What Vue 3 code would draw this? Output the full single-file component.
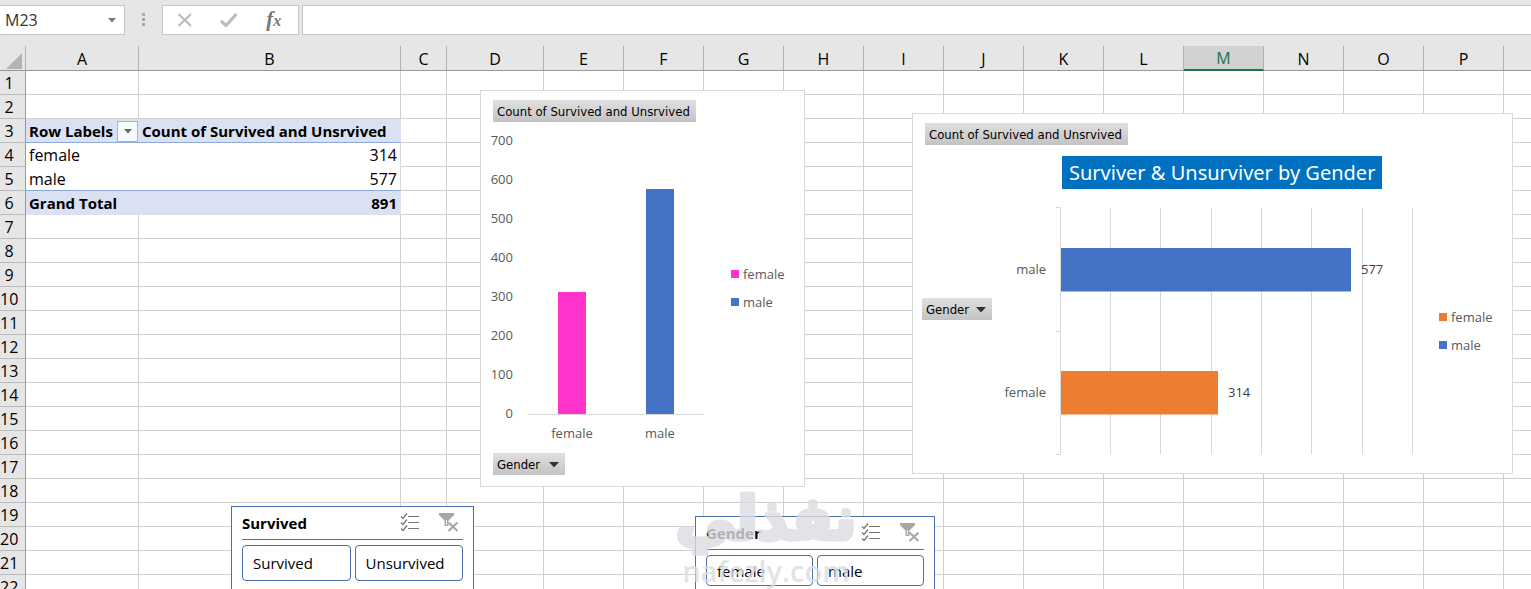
<script setup>
import { ref } from 'vue'

const cellName = ref('M23')
const formula = ref('')

const columns = 'ABCDEFGHIJKLMNOP'.split('')
const activeColumn = 'M'
const rowCount = 22

const pivot = {
  3: { a: 'Row Labels', b: 'Count of Survived and Unsrvived', kind: 'head' },
  4: { a: 'female', b: '314', kind: 'item' },
  5: { a: 'male', b: '577', kind: 'last' },
  6: { a: 'Grand Total', b: '891', kind: 'total' },
}

// Column chart geometry
const base = 292
const perHundred = 39
const ticks = [700, 600, 500, 400, 300, 200, 100, 0]
const bars = [
  { name: 'female', value: 314, x: 77, color: '#ff33cc' },
  { name: 'male', value: 577, x: 165, color: '#4472c4' },
]
const barHeight = (v) => Math.round((v / 100) * perHundred)

// Bar chart geometry
const axisX = 68
const gridX = [118, 168, 219, 269, 319, 370, 420]
const hbars = [
  { name: 'male', value: 577, y: 59, color: '#4472c4' },
  { name: 'female', value: 314, y: 182, color: '#ed7d31' },
]
const barWidth = (v) => Math.floor(v * 0.503)

const legends = {
  first: [{ name: 'female', cls: 'pink' }, { name: 'male', cls: 'blue' }],
  second: [{ name: 'female', cls: 'orange' }, { name: 'male', cls: 'blue' }],
}

const slicers = [
  { title: 'Survived', cls: 'slicer-survived', items: ['Survived', 'Unsurvived'] },
  { title: 'Gender', cls: 'slicer-gender', items: ['female', 'male'] },
]
</script>

<template>
  <div class="app">
    <header class="formula-bar">
      <div class="name-box">
        <input v-model="cellName" aria-label="Name box" />
        <button type="button" aria-label="Open name list">
          <svg width="8" height="5" viewBox="0 0 8 5"><path d="M0 0h8L4 4.500z" fill="#777" /></svg>
        </button>
      </div>
      <svg class="grip" width="3" height="14" viewBox="0 0 3 14" fill="#a9a9a9">
        <path d="M0 0h3v3H0zM0 5h3v3H0zM0 10h3v3H0z" />
      </svg>
      <div class="tools">
        <button type="button" aria-label="Cancel">
          <svg width="16" height="14" viewBox="0 0 16 14"><path d="M1.500 1 14 13M14 1 1.500 13" stroke="#bdbdbd" stroke-width="2.200" fill="none" /></svg>
        </button>
        <button type="button" aria-label="Enter">
          <svg width="18" height="14" viewBox="0 0 18 14"><path d="M1 8l5 4.500L16.500 1" stroke="#bdbdbd" stroke-width="3.200" fill="none" /></svg>
        </button>
        <button type="button" class="fx" aria-label="Insert function"><span>f</span><small>x</small></button>
      </div>
      <input v-model="formula" class="formula" aria-label="Formula" />
    </header>

    <main class="sheet">
      <table class="grid">
        <colgroup>
          <col class="c-head" />
          <col v-for="c in columns" :key="c" :class="'c-' + c" />
          <col class="c-rest" />
        </colgroup>
        <thead>
          <tr>
            <th class="corner">
              <svg width="16" height="16" viewBox="0 0 16 16"><path d="M16 0v16H0z" fill="#b4b4b4" /></svg>
            </th>
            <th v-for="c in columns" :key="c" scope="col" :class="{ active: c === activeColumn }">{{ c }}</th>
            <th></th>
          </tr>
        </thead>
        <tbody>
          <tr v-for="r in rowCount" :key="r">
            <th scope="row">{{ r }}</th>
            <template v-for="c in columns" :key="c">
              <td v-if="pivot[r] && c === 'A'" :class="['pivot', pivot[r].kind]">
                <div v-if="pivot[r].kind === 'head'" class="label">
                  <span>{{ pivot[r].a }}</span>
                  <button type="button" class="filter" aria-label="Filter row labels">
                    <svg width="8" height="5" viewBox="0 0 8 5"><path d="M0 0h8L4 4.500z" fill="#666" /></svg>
                  </button>
                </div>
                <template v-else>{{ pivot[r].a }}</template>
              </td>
              <td v-else-if="pivot[r] && c === 'B'" :class="['pivot', 'value', pivot[r].kind]">{{ pivot[r].b }}</td>
              <td v-else></td>
            </template>
            <td></td>
          </tr>
        </tbody>
      </table>

      <section class="chart chart-columns" aria-label="Column chart">
        <button type="button" class="field">Count of Survived and Unsrvived</button>
        <div class="body">
          <svg width="234" height="331" viewBox="0 0 234 331">
            <text v-for="(t, i) in ticks" :key="t" x="32" :y="23 + i * perHundred" text-anchor="end">{{ t }}</text>
            <path d="M47 292.500H223" stroke="#d9d9d9" />
            <g v-for="b in bars" :key="b.name">
              <rect :x="b.x" :y="base - barHeight(b.value)" width="28" :height="barHeight(b.value)" :fill="b.color" />
              <text :x="b.x + 14" y="316" text-anchor="middle">{{ b.name }}</text>
            </g>
          </svg>
          <ul class="legend">
            <li v-for="l in legends.first" :key="l.name"><i :class="l.cls"></i>{{ l.name }}</li>
          </ul>
        </div>
        <button type="button" class="field drop">Gender
          <svg width="10" height="6" viewBox="0 0 10 6"><path d="M0 0h10L5 5.500z" fill="#333" /></svg>
        </button>
      </section>

      <section class="chart chart-bars" aria-label="Bar chart">
        <button type="button" class="field">Count of Survived and Unsrvived</button>
        <h2>Surviver &amp; Unsurviver by Gender</h2>
        <div class="body">
          <button type="button" class="field drop">Gender
            <svg width="10" height="6" viewBox="0 0 10 6"><path d="M0 0h10L5 5.500z" fill="#333" /></svg>
          </button>
          <svg width="433" height="284" viewBox="0 0 433 284">
            <path v-for="x in gridX" :key="x" :d="`M${x + 0.5} 19V265`" stroke="#d9d9d9" />
            <path d="M64 18.500h4.500V265.500H64M64 142.500h4" stroke="#d9d9d9" fill="none" />
            <g v-for="b in hbars" :key="b.name">
              <rect :x="axisX + 1" :y="b.y" :width="barWidth(b.value)" height="43.500" :fill="b.color" />
              <text x="54" :y="b.y + 26" text-anchor="end">{{ b.name }}</text>
              <text class="value-label" :x="axisX + barWidth(b.value) + 11" :y="b.y + 26">{{ b.value }}</text>
            </g>
          </svg>
          <ul class="legend">
            <li v-for="l in legends.second" :key="l.name"><i :class="l.cls"></i>{{ l.name }}</li>
          </ul>
        </div>
      </section>

      <section v-for="s in slicers" :key="s.title" :class="['slicer', s.cls]" :aria-label="s.title">
        <div class="slicer-head">
          <h3>{{ s.title }}</h3>
          <button type="button" aria-label="Multi-select">
            <svg width="19" height="19" viewBox="0 0 19 19" fill="none" stroke="#777">
              <path d="M8 3.500h11M8 9.500h11M8 15.500h11" />
              <path d="M1 3.500l2 2 4-5M1 9.500l2 2 4-5M1 15.500l2 2 4-5" stroke-width="1.300" />
            </svg>
          </button>
          <button type="button" aria-label="Clear filter">
            <svg width="20" height="19" viewBox="0 0 20 19">
              <path d="M0 0h15v2L9.500 7.500V13H5.500V7.500L0 2z" fill="#a6a6a6" />
              <path d="M7.500 7v5" stroke="#eee" />
              <path d="M9.500 9.500l9 8.500M18.500 9.500l-9 8.500" stroke="#a6a6a6" stroke-width="2" />
            </svg>
          </button>
        </div>
        <div class="slicer-items">
          <button v-for="i in s.items" :key="i" type="button">{{ i }}</button>
        </div>
      </section>

      <div class="watermark">
        <svg width="200" height="104" viewBox="0 0 200 104">
          <text class="arabic" x="102" y="54" text-anchor="middle">نفذلي</text>
          <text class="latin" x="102" y="97" text-anchor="middle">nafezly.com</text>
        </svg>
      </div>
    </main>
  </div>
</template>

<style>
body {
  margin: 0;
}
</style>

<style scoped>
.app {
  display: flex;
  flex-direction: column;
  height: 100vh;
  overflow: hidden;
  background: #e6e6e6;
  font-family: "Open Sans", "Noto Sans", sans-serif;
  font-size: 16px;
  color: #000;
}
.app *,
.app *::before {
  box-sizing: border-box;
}
button {
  margin: 0;
  padding: 0;
  border: 0;
  background: none;
  font: inherit;
  color: inherit;
}
.formula-bar {
  display: flex;
  align-items: stretch;
  height: 46px;
  padding: 5px 0 11px;
  flex: none;
}
.name-box {
  display: flex;
  width: 125px;
  background: #fff;
  border: 1px solid #c6c6c6;
  border-left: 0;
}
.name-box input {
  width: 104px;
  padding: 0 0 0 5px;
  border: 0;
  outline: 0;
  background: none;
  font: inherit;
  font-size: 16px;
  color: #333;
}
.name-box button {
  display: flex;
  align-items: center;
  padding-left: 4px;
}
.grip {
  margin: 8px 17px 0;
}
.tools {
  display: flex;
  width: 137px;
  padding-right: 2px;
  background: #fff;
  border: 1px solid #c6c6c6;
}
.tools button {
  display: flex;
  flex: 1;
  align-items: center;
  justify-content: center;
}
.tools .fx {
  align-items: baseline;
  font-family: "Liberation Serif", serif;
  font-style: italic;
  font-weight: bold;
  font-size: 21px;
  line-height: 26px;
  color: #777;
}
.fx small {
  font-size: 16px;
}
.formula {
  flex: 1;
  min-width: 0;
  margin-left: 3px;
  padding: 0 6px;
  border: 1px solid #c6c6c6;
  border-right: 0;
  outline: 0;
  background: #fff;
  font: inherit;
}

.sheet {
  position: relative;
  flex: 1;
  min-height: 0;
  overflow: hidden;
}
.grid {
  width: 100%;
  table-layout: fixed;
  border-collapse: separate;
  border-spacing: 0;
  background: #fff;
}
.grid col {
  width: 80px;
}
.grid .c-head {
  width: 26px;
}
.grid .c-A {
  width: 113px;
}
.grid .c-B {
  width: 262px;
}
.grid .c-C {
  width: 46px;
}
.grid .c-D {
  width: 97px;
}
.grid .c-rest {
  width: auto;
}
.grid th,
.grid td {
  height: 24px;
  padding: 2px 0 0;
  border-right: 1px solid #d0d0d0;
  border-bottom: 1px solid #d0d0d0;
  line-height: 21px;
  white-space: nowrap;
}
.grid th:last-child,
.grid td:last-child {
  border-right: 0;
}
.grid th {
  background: #e6e6e6;
  font-weight: 400;
  text-align: center;
}
.grid thead th {
  height: 25px;
  line-height: 22px;
  border-right-color: #b0b0b0;
  border-bottom-color: #999;
}
.grid thead .active {
  background: #d2d2d2;
  border-bottom: 2px solid #217346;
  line-height: 21px;
  color: #217346;
}
.grid tbody th {
  padding-right: 7px;
  border-right-color: #999;
  border-bottom-color: #bbb;
}
.grid .corner {
  padding: 5px 3px 0 6px;
  line-height: 0;
}
.grid .pivot {
  padding-left: 3px;
  border-bottom-color: #fff;
  border-right-color: #fff;
}
.grid .value {
  padding-right: 3px;
  border-right-color: #d9d9d9;
  text-align: right;
}
.grid .head,
.grid .total {
  background: #d9e1f2;
  border-color: #d9e1f2;
  font-size: 15px;
  font-weight: 700;
}
.grid .head {
  border-bottom-color: #8ea9db;
}
.grid .head.value {
  text-align: left;
}
.grid .last {
  border-bottom-color: #8ea9db;
}
.label {
  display: flex;
  justify-content: space-between;
  align-items: center;
  height: 21px;
}
.filter {
  display: flex;
  align-items: center;
  justify-content: center;
  width: 21px;
  height: 21px;
  border: 1px solid #a6b4cc;
  background: #f8f9fc;
}

.chart {
  position: absolute;
  display: flex;
  flex-direction: column;
  align-items: flex-start;
  padding-top: 9px;
  border: 1px solid #d9d9d9;
  background: #fff;
  font-size: 13px;
  color: #595959;
}
.chart-columns {
  left: 480px;
  top: 44px;
  width: 325px;
  height: 397px;
}
.chart-bars {
  left: 912px;
  top: 67px;
  width: 601px;
  height: 361px;
}
.chart svg {
  flex: none;
  font-size: 13px;
  fill: #595959;
}
.chart .value-label {
  fill: #404040;
}
.body {
  display: flex;
  align-items: center;
}
.field {
  flex: none;
  height: 22px;
  margin-left: 12px;
  padding: 2px 6px 0 4px;
  background: linear-gradient(#e0e0e0, #c3c3c3);
  font-family: "DejaVu Sans Condensed", "Open Sans", sans-serif;
  font-size: 13px;
  line-height: 20px;
  color: #000;
  white-space: nowrap;
}
.drop {
  display: flex;
  align-items: center;
  justify-content: space-between;
  width: 72px;
}
.chart-bars .drop {
  align-self: flex-start;
  width: 70px;
  margin: 109px 0 0 9px;
}
.chart h2 {
  margin: 11px 0 0 149px;
  padding: 0 7px;
  background: #0070c0;
  font-family: "Noto Sans", "Open Sans", sans-serif;
  font-size: 20px;
  font-weight: 400;
  line-height: 33px;
  color: #fff;
}
.legend {
  margin: 0 0 0 16px;
  padding: 0;
  list-style: none;
}
.chart-bars .legend {
  margin-left: 14px;
}
.legend li {
  display: flex;
  align-items: center;
  gap: 4px;
  line-height: 28px;
}
.legend i {
  width: 8px;
  height: 8px;
}
.pink {
  background: #ff33cc;
}
.blue {
  background: #4472c4;
}
.orange {
  background: #ed7d31;
}

.slicer {
  position: absolute;
  padding: 0 10px;
  border: 1px solid #4a6fae;
  background: #fff;
}
.slicer-survived {
  left: 231px;
  top: 460px;
  width: 243px;
  height: 120px;
}
.slicer-gender {
  left: 695px;
  top: 470px;
  width: 240px;
  height: 120px;
}
.slicer-head {
  display: flex;
  align-items: center;
  height: 33px;
  border-bottom: 1px solid #4a6fae;
}
.slicer-head h3 {
  flex: 1;
  margin: 0;
  font-size: 15px;
  line-height: 32px;
}
.slicer-head button {
  display: flex;
  margin: 0 4px 2px 0;
}
.slicer-head button:nth-of-type(1) {
  margin-right: 20px;
}
.slicer-items {
  display: grid;
  grid-template-columns: 1fr 1fr;
  gap: 4px;
  padding-top: 5px;
}
.slicer-items button {
  height: 36px;
  padding-left: 10px;
  border: 1px solid #4a6fae;
  border-radius: 4px;
  background: #fff;
  font-size: 15px;
  text-align: left;
}
.slicer-gender .slicer-items button {
  height: 31px;
}

.watermark {
  position: absolute;
  left: 664px;
  top: 439px;
  opacity: 0.8;
  pointer-events: none;
}
.watermark text {
  fill: #dddde2;
  font-family: "DejaVu Sans", sans-serif;
  font-weight: 700;
}
.watermark .arabic {
  font-size: 59px;
  stroke: #dddde2;
  stroke-width: 5px;
  stroke-linejoin: round;
}
.watermark .latin {
  font-family: "Open Sans", sans-serif;
  font-size: 29px;
  font-weight: 600;
}
</style>
